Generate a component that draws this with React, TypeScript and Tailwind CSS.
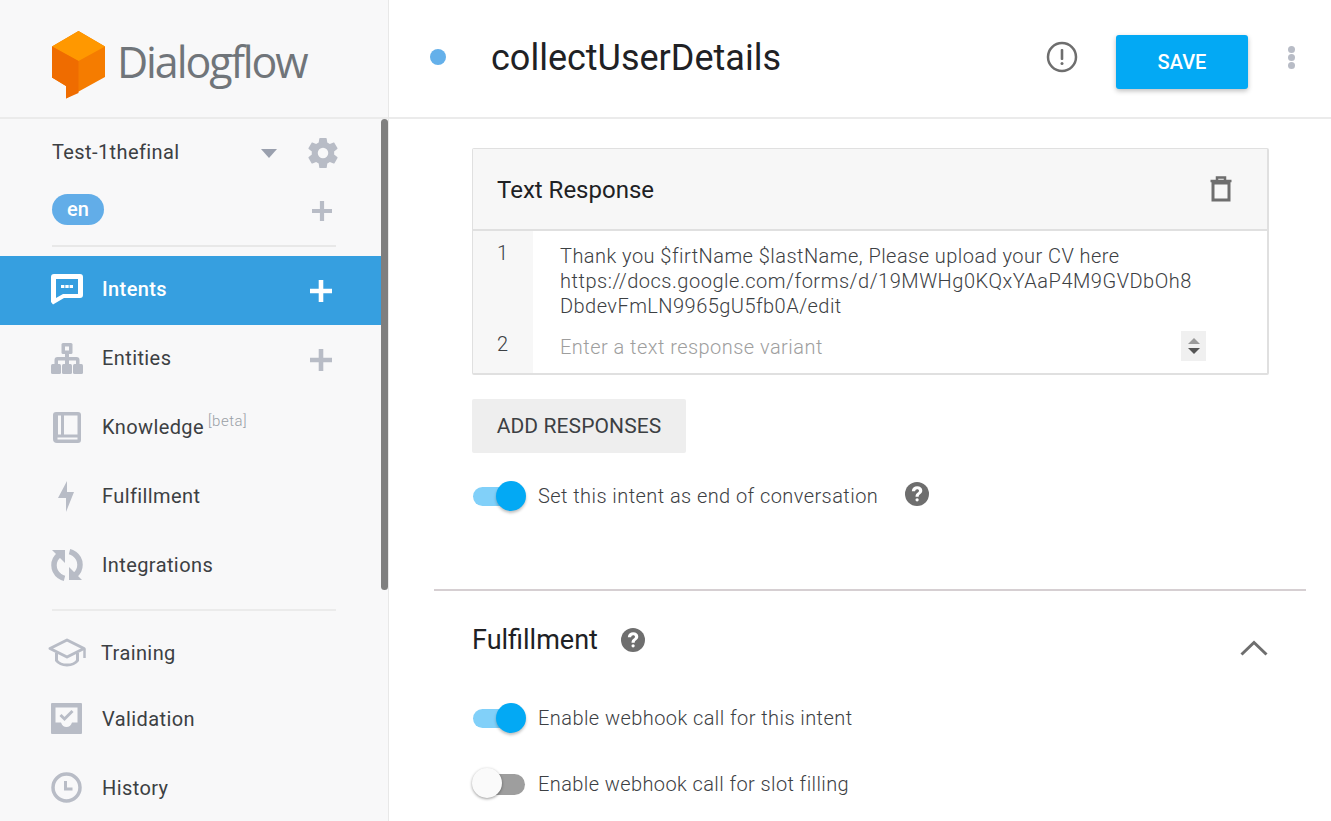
import React from 'react'

const roboto = { fontFamily: 'Roboto, sans-serif' }

function Logo() {
  return (
    <svg width="54" height="68" viewBox="0 0 54 68">
      <path d="M26.5 0 L53 15.5 L53 46 L14 67.5 L14 55 L0 46.5 L0 15.5 Z" fill="#f57c00" />
      <path d="M26.5 0 L53 15.5 L26.5 30 L0 15.5 Z" fill="#ff9800" />
      <path d="M0 15.5 L26.5 30 L26.5 62 L14 67.5 L14 55 L0 46.5 Z" fill="#ef6c00" />
    </svg>
  )
}

function Plus({ color = '#b8bcc6', size = 22 }: { color?: string; size?: number }) {
  return (
    <svg width={size} height={size} viewBox="0 0 22 22">
      <path d="M8.7 0h4.6v8.7H22v4.6h-8.7V22H8.7v-8.7H0V8.7h8.7z" fill={color} />
    </svg>
  )
}

function Gear() {
  return (
    <svg width="36" height="36" viewBox="0 0 24 24">
      <path
        fill="#b8bcc6"
        d="M19.4 13c.04-.33.06-.66.06-1s-.02-.67-.06-1l2.1-1.65c.2-.15.25-.42.13-.64l-2-3.46c-.12-.22-.39-.3-.61-.22l-2.49 1c-.52-.4-1.08-.73-1.69-.98l-.38-2.65A.49.49 0 0 0 14 2h-4c-.25 0-.46.18-.49.42l-.38 2.65c-.61.25-1.17.59-1.69.98l-2.49-1c-.23-.09-.49 0-.61.22l-2 3.46c-.13.22-.07.49.12.64L4.57 11c-.04.33-.07.67-.07 1s.03.67.07 1l-2.11 1.65c-.19.15-.25.42-.12.64l2 3.46c.12.22.39.3.61.22l2.49-1c.52.4 1.08.73 1.69.98l.38 2.65c.03.24.24.42.49.42h4c.25 0 .46-.18.49-.42l.38-2.65c.61-.25 1.17-.59 1.69-.98l2.49 1c.23.09.49 0 .61-.22l2-3.46c.12-.22.07-.49-.13-.64L19.4 13zM12 15.5a3.5 3.5 0 1 1 0-7 3.5 3.5 0 0 1 0 7z"
      />
    </svg>
  )
}

function IntentsIcon() {
  return (
    <svg width="32" height="31" viewBox="0 0 32 31">
      <path d="M3 0h26a3 3 0 0 1 3 3v18a3 3 0 0 1-3 3H13L2 30.5 0 28V3a3 3 0 0 1 3-3z" fill="#fff" />
      <path d="M5 5h22v15H12l-7 4z" fill="#369fe0" />
      <path d="M10 11h3.4v3H10zM14.3 11h3.4v3h-3.4zM18.6 11H22v3h-3.4z" fill="#fff" />
    </svg>
  )
}

function EntitiesIcon() {
  return (
    <svg width="32" height="31" viewBox="0 0 32 31" fill="#b8bcc6">
      <rect x="10.500" y="0" width="11" height="11" rx="1.500" />
      <rect x="14" y="10" width="4" height="12" />
      <path d="M3.500 22v-5a3 3 0 0 1 3-3h19a3 3 0 0 1 3 3v5h-3.500v-4.500H7V22z" />
      <rect x="0" y="21" width="10" height="10" rx="1.500" />
      <rect x="11" y="21" width="10" height="10" rx="1.500" />
      <rect x="22" y="21" width="10" height="10" rx="1.500" />
      <rect x="14" y="3.500" width="4" height="4" fill="#f8f8f9" />
    </svg>
  )
}

function KnowledgeIcon() {
  return (
    <svg width="28" height="31" viewBox="0 0 28 31">
      <path d="M3 0h22a3 3 0 0 1 3 3v25a3 3 0 0 1-3 3H4a4 4 0 0 1-4-4V3a3 3 0 0 1 3-3z" fill="#b8bcc6" />
      <path d="M5 3.500h3v19H5zM11 3.500h13.500v19H11zM4.500 25.500h20v2H4.500z" fill="#f8f8f9" />
    </svg>
  )
}

function BoltIcon() {
  return (
    <svg width="16" height="31" viewBox="0 0 16 31">
      <path d="M9 0 L9 11 L16 11 L8 31 L8 17 L0 17 Z" fill="#b8bcc6" />
    </svg>
  )
}

function IntegrationsIcon() {
  return (
    <svg width="32" height="32" viewBox="0 0 32 32" fill="none">
      <path d="M8 6C1.500 11 1 21.500 8.500 27c1.500 1 3 1.800 5 2.300" stroke="#b8bcc6" strokeWidth="5.500" />
      <path d="M24 26c6.500-5 7-15.500-.500-21-1.500-1-3-1.800-5-2.300" stroke="#b8bcc6" strokeWidth="5.500" />
      <path d="M1 1h13v13z" fill="#b8bcc6" />
      <path d="M31 31H18V18z" fill="#b8bcc6" />
    </svg>
  )
}

function TrainingIcon() {
  return (
    <svg width="40" height="29" viewBox="0 0 40 29" fill="none">
      <path d="M20 2 L37 10.500 L20 19 L3 10.500 Z" stroke="#b8bcc6" strokeWidth="3" strokeLinejoin="round" />
      <path d="M9.500 15v7.500C12 26 16 27 20 27s8-1 10.500-4.500V15" stroke="#b8bcc6" strokeWidth="3" />
      <path d="M37.500 10.500V20" stroke="#b8bcc6" strokeWidth="2.500" />
    </svg>
  )
}

function ValidationIcon() {
  return (
    <svg width="31" height="31" viewBox="0 0 31 31">
      <path d="M0 1a1 1 0 0 1 1-1h29a1 1 0 0 1 1 1v29a1 1 0 0 1-1 1H1a1 1 0 0 1-1-1z" fill="#b8bcc6" />
      <path d="M4.500 4.500h22v15H21c-1 3-3 4.500-5.500 4.500S11 22.500 10 19.500H4.500z" fill="#f8f8f9" />
      <path d="M9.500 12l4 4 8-8" stroke="#b8bcc6" strokeWidth="3" fill="none" />
    </svg>
  )
}

function HistoryIcon() {
  return (
    <svg width="31" height="31" viewBox="0 0 31 31" fill="none">
      <circle cx="15.500" cy="15.500" r="13.500" stroke="#b8bcc6" strokeWidth="3.500" />
      <path d="M14.500 9v8h7" stroke="#b8bcc6" strokeWidth="3" />
    </svg>
  )
}

function HelpIcon() {
  return (
    <svg width="24" height="24" viewBox="0 0 24 24">
      <circle cx="12" cy="12" r="12" fill="#6e6e6e" />
      <path d="M6.800 9.300C7 6 9.300 4.300 12.200 4.300c3 0 5.100 1.800 5.100 4.300 0 1.900-1 2.800-2.200 3.700-1 .7-1.400 1.200-1.400 2.500h-3.200c0-2.200.8-3.200 2-4.100 1-.7 1.500-1.200 1.500-2 0-.9-.7-1.500-1.800-1.500-1.200 0-1.900.8-2.100 2.100z" fill="#fff" />
      <rect x="10.500" y="16.200" width="3.200" height="3.200" rx="1.600" fill="#fff" />
    </svg>
  )
}

function Switch({ on }: { on: boolean }) {
  if (on) {
    return (
      <div className="relative w-[54px] h-8 flex items-center shrink-0">
        <div className="w-[50px] h-[19px] ml-[1px] rounded-full bg-[#81d0f9]" />
        <div className="absolute right-0 top-[1px] w-[30px] h-[30px] rounded-full bg-[#03a9f4] shadow-[0_2px_3px_rgba(0,0,0,0.25)]" />
      </div>
    )
  }
  return (
    <div className="relative w-[54px] h-8 flex items-center justify-end shrink-0">
      <div className="w-[50px] h-[21px] rounded-full bg-[#9e9e9e] mr-[1px]" />
      <div className="absolute left-0 top-0 w-[30px] h-[30px] rounded-full bg-[#fafafa] shadow-[0_1px_3px_rgba(0,0,0,0.4)]" />
    </div>
  )
}

function NavItem({ icon, label, active, plus, sup, h = 'h-[69px]', labelClass = '' }: { icon: React.ReactNode; label: string; active?: boolean; plus?: boolean; sup?: string; h?: string; labelClass?: string }) {
  return (
    <div className={`${h} flex items-center pl-[51px] pr-[49px] ${active ? 'bg-[#369fe0] text-white font-medium' : 'text-[#3c4043]'}`}>
      <div className="w-[51px] shrink-0 flex items-center justify-start -mt-[3px]">{icon}</div>
      <span className={`text-[20px] leading-6 tracking-[0.4px] -mt-[3px] ${labelClass}`}>{label}</span>
      {sup && <span className="text-[15px] font-light text-[#9aa0a6] ml-1 -mt-[15px] tracking-[0.5px]">{sup}</span>}
      <div className="flex-1" />
      {plus && <Plus color={active ? '#fff' : '#b8bcc6'} />}
    </div>
  )
}

export default function App() {
  return (
    <div className="w-[1331px] h-[821px] overflow-hidden flex bg-white" style={roboto}>
      <aside className="relative w-[389px] shrink-0 bg-[#f8f8f9] border-r border-[#e8e8e8] overflow-hidden">
        <div className="h-[119px] border-b-2 border-[#ebebeb] flex items-start pl-[52px] pt-[31px] gap-[11px]">
          <Logo />
          <span className="text-[43px] leading-[62px] text-[#70757a] tracking-[-2.1px]" style={{ fontFamily: '"Open Sans", sans-serif' }}>Dialogflow</span>
        </div>
        <div className="w-[381px]">
          <div className="flex items-center h-[65px] pl-[52px] pr-[40px]">
            <span className="text-[20px] text-[#3c4043] tracking-[0.4px]">Test-1thefinal</span>
            <div className="flex-1" />
            <div className="w-0 h-0 border-x-[8px] border-x-transparent border-t-[9px] border-t-[#9aa0ae] mr-[28px] mt-[3px]" />
            <div className="mt-[3px]"><Gear /></div>
          </div>
          <div className="flex items-center justify-between h-[50px] pl-[52px] pr-[49px]">
            <span className="w-[52px] h-[31px] rounded-full bg-[#62ade8] text-white text-[20px] font-medium flex items-center justify-center">en</span>
            <div className="mt-[4px]"><Plus size={20} /></div>
          </div>
          <div className="h-[2px] ml-[52px] mr-[45px] mt-[11px] mb-[9px] bg-[#e8e8e8]" />
          <NavItem icon={<IntentsIcon />} label="Intents" active plus />
          <NavItem icon={<EntitiesIcon />} label="Entities" plus />
          <NavItem icon={<div className="pl-[2px]"><KnowledgeIcon /></div>} label="Knowledge" sup="[beta]" />
          <NavItem icon={<div className="pl-[7px]"><BoltIcon /></div>} label="Fulfillment" />
          <NavItem icon={<IntegrationsIcon />} label="Integrations" />
          <div className="h-[2px] ml-[52px] mr-[45px] mt-[8px] mb-[10px] bg-[#ebebeb]" />
          <NavItem h="h-[66px]" icon={<div className="-ml-[4px]"><TrainingIcon /></div>} label="Training" labelClass="-ml-[1px]" />
          <NavItem h="h-[66px]" icon={<ValidationIcon />} label="Validation" />
          <NavItem h="h-[72px]" icon={<HistoryIcon />} label="History" />
        </div>
        <div className="absolute left-[381px] top-[119px] w-[7px] h-[471px] rounded-full bg-[#7f7f7f]" />
      </aside>

      <main className="flex-1 min-w-0">
        <header className="h-[119px] border-b-2 border-[#ebebeb] flex items-center pl-[41px] pr-[36px]">
          <div className="w-4 h-4 rounded-full bg-[#64b0ea] -mt-[4px]" />
          <h1 className="ml-[45px] text-[36px] leading-[40px] text-[#202124] -mt-[2px]">collectUserDetails</h1>
          <div className="flex-1" />
          <svg className="-mt-[3px] mr-[38px]" width="32" height="32" viewBox="0 0 32 32" fill="none">
            <circle cx="16" cy="16" r="14" stroke="#6e6e6e" strokeWidth="2.500" />
            <rect x="14.700" y="8" width="2.600" height="11" rx="1" fill="#6e6e6e" />
            <circle cx="16" cy="22.500" r="1.500" fill="#6e6e6e" />
          </svg>
          <button className="w-[132px] h-[54px] rounded-[3px] bg-[#03a9f4] text-white text-[20px] font-medium shadow-[0_2px_5px_rgba(0,0,0,0.26)] flex items-center justify-center mt-[7px]">SAVE</button>
          <div className="ml-[40px] flex flex-col gap-[1px] -mt-[3px]">
            <div className="w-[7px] h-[7px] rounded-full bg-[#b8bcc6]" />
            <div className="w-[7px] h-[7px] rounded-full bg-[#b8bcc6]" />
            <div className="w-[7px] h-[7px] rounded-full bg-[#b8bcc6]" />
          </div>
        </header>

        <div className="pl-[83px] pr-[63px] pt-[29px]">
          <div className="border-2 border-[#e0e0e0] border-t-[1px] border-l-[1px] rounded-[2px] h-[227px] w-[797px] overflow-hidden">
            <div className="h-[82px] bg-[#f7f7f7] border-b-2 border-[#e0e0e0] flex items-center pl-[24px] pr-[34px]">
              <span className="flex-1 text-[24px] text-[#202124] pt-[2px]">Text Response</span>
              <svg width="24" height="26" viewBox="0 0 24 26" fill="none">
                <path d="M4 7h16v17H4z" stroke="#6e6e6e" strokeWidth="3" />
                <path d="M1.500 5h21" stroke="#6e6e6e" strokeWidth="2.500" />
                <path d="M8 4V1.500h8V4" stroke="#6e6e6e" strokeWidth="2.500" />
              </svg>
            </div>
            <div className="flex h-[143px]">
              <div className="w-[60px] bg-[#f7f7f7] text-[20px] font-light text-[#3c4043] shrink-0 pl-[24px]">
                <div className="h-[91px] pt-[10px] leading-6">1</div>
                <div className="leading-6 pt-[10px]">2</div>
              </div>
              <div className="flex-1 pl-[27px] pr-[61px]">
                <div className="h-[91px] pt-[13px] text-[20px] leading-[25px] font-light text-[#3c4043] tracking-[0.46px]">
                  Thank you $firtName $lastName, Please upload your CV here<br />
                  <span className="tracking-[0.52px]">https://docs.google.com/forms/d/19MWHg0KQxYAaP4M9GVDbOh8</span><br />
                  DbdevFmLN9965gU5fb0A/edit
                </div>
                <div className="flex items-center justify-between h-[30px] mt-[10px]">
                  <span className="text-[20px] font-light text-[#9e9e9e] tracking-[0.46px]">Enter a text response variant</span>
                  <div className="w-[25px] h-[30px] -mt-[2px] bg-[#f0f0f0] flex flex-col items-center justify-center gap-[4px]">
                    <div className="w-0 h-0 border-x-[6px] border-x-transparent border-b-[6px] border-b-[#9a9a9a]" />
                    <div className="w-0 h-0 border-x-[6px] border-x-transparent border-t-[6px] border-t-[#555]" />
                  </div>
                </div>
              </div>
            </div>
          </div>

          <button className="mt-[24px] w-[214px] h-[54px] rounded-[2px] bg-[#eeeeee] text-[21px] text-[#3c4043] flex items-center justify-center pt-[2px] tracking-[0.1px]">ADD RESPONSES</button>

          <div className="mt-[27px] flex items-center">
            <Switch on />
            <span className="ml-[12px] text-[20px] font-light text-[#3c4043] tracking-[0.43px]">Set this intent as end of conversation</span>
            <div className="ml-[27px] -mt-[4px]"><HelpIcon /></div>
          </div>
        </div>

        <div className="h-[2px] bg-[#d6cfd2] ml-[45px] mr-[25px] mt-[77px]" />

        <div className="pl-[83px] pr-[63px]">
          <div className="flex items-center h-[50px] mt-[24px]">
            <span className="text-[27px] text-[#202124]">Fulfillment</span>
            <div className="ml-[23px]"><HelpIcon /></div>
            <div className="flex-1" />
            <svg className="mt-[15px]" width="28" height="16" viewBox="0 0 28 16" fill="none">
              <path d="M1.500 14.500L14 2.500l12.500 12" stroke="#6e6e6e" strokeWidth="3" />
            </svg>
          </div>
          <div className="mt-[37px] flex items-center">
            <Switch on />
            <span className="ml-[12px] text-[20px] font-light text-[#3c4043] tracking-[0.43px]">Enable webhook call for this intent</span>
          </div>
          <div className="mt-[34px] flex items-center">
            <Switch on={false} />
            <span className="ml-[12px] text-[20px] font-light text-[#3c4043] tracking-[0.4px]">Enable webhook call for slot filling</span>
          </div>
        </div>
      </main>
    </div>
  )
}
